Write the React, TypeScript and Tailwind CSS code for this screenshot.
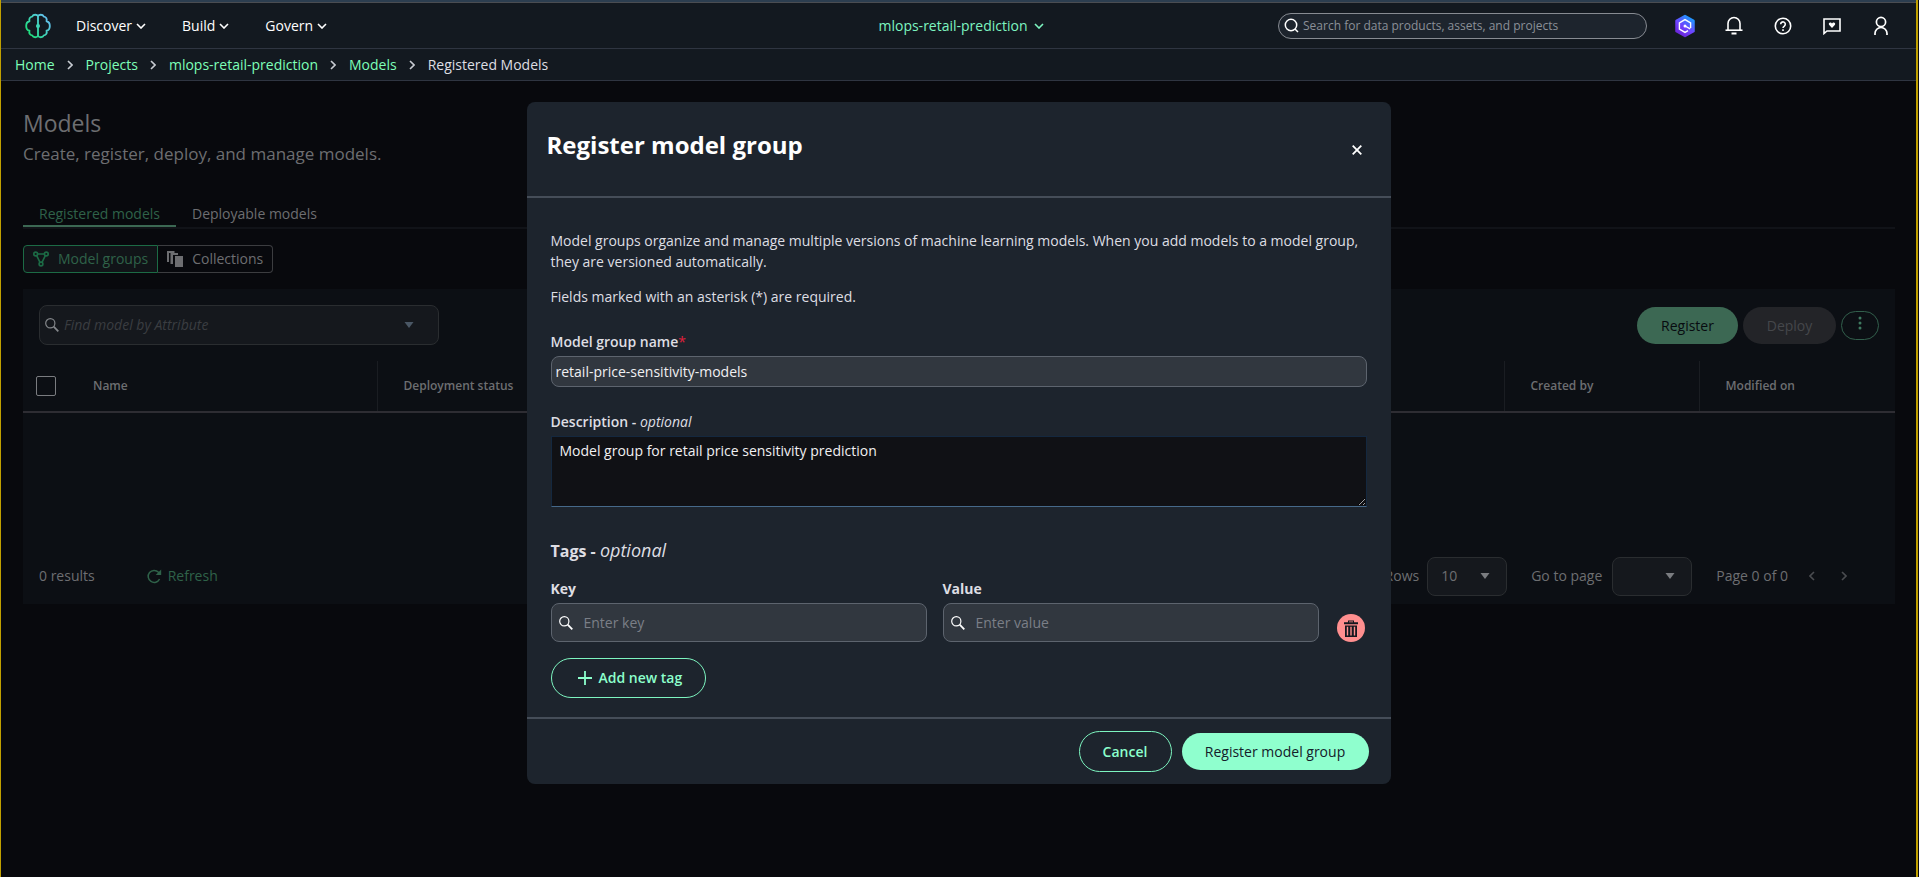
import { ReactNode, useState } from 'react';

const menus = ['Discover', 'Build', 'Govern'];
const crumbs = ['Home', 'Projects', 'mlops-retail-prediction', 'Models'];

function ChevronDown() {
  return (
    <svg className="w-[10px] h-[6px]" viewBox="0 0 10 6" fill="none" stroke="currentColor" strokeWidth="1.6">
      <path d="M1 1l4 4 4-4" />
    </svg>
  );
}

function ChevronRight({ className = '' }: { className?: string }) {
  return (
    <svg className={`w-[6px] h-[10px] ${className}`} viewBox="0 0 6 10" fill="none" stroke="currentColor" strokeWidth="1.6">
      <path d="M1 1l4 4-4 4" />
    </svg>
  );
}

function Caret({ className = '' }: { className?: string }) {
  return (
    <svg className={`w-[10px] h-[6px] pointer-events-none ${className}`} viewBox="0 0 10 6" fill="currentColor">
      <path d="M0.5 0h9L5 6z" />
    </svg>
  );
}

function SearchIcon({ className = '' }: { className?: string }) {
  return (
    <svg className={`w-[14px] h-[14px] ${className}`} viewBox="0 0 14 14" fill="none" stroke="currentColor">
      <circle cx="5.3" cy="5.3" r="4.6" strokeWidth="1.2" />
      <path d="M8.7 8.7l4.6 4.6" strokeWidth="1.8" />
    </svg>
  );
}

function Logo() {
  return (
    <svg className="w-[26px] h-[26px]" viewBox="0 0 24 24" fill="none" stroke="url(#logo)" strokeWidth="1.7" strokeLinejoin="round">
      <defs>
        <linearGradient id="logo" x1="0" y1="22" x2="24" y2="3" gradientUnits="userSpaceOnUse">
          <stop offset="0" stopColor="#10e060" />
          <stop offset="0.5" stopColor="#3fd6b8" />
          <stop offset="1" stopColor="#6fb8ff" />
        </linearGradient>
      </defs>
      <path d="M12 3C11.200 1.200 7.800 0.900 6.600 3.300C4.400 3.600 3.600 5.400 4.100 7.600C2.200 8 1.100 9.700 1.100 12S2.200 16 4.100 16.400C3.600 18.600 4.400 20.400 6.600 20.700C7.800 23.100 11.200 22.800 12 21V3z" />
      <path d="M12 3C12.800 1.200 16.200 0.900 17.400 3.300C19.600 3.600 20.400 5.400 19.900 7.600C21.800 8 22.900 9.700 22.900 12S21.800 16 19.900 16.400C20.400 18.600 19.600 20.400 17.400 20.700C16.200 23.100 12.800 22.800 12 21" />
      <circle cx="12" cy="12" r="1.900" fill="#3fd6b8" stroke="none" />
    </svg>
  );
}

function IconButton({ label, children }: { label: string; children: ReactNode }) {
  return (
    <button aria-label={label} className="w-6 h-6 flex items-center justify-center">
      {children}
    </button>
  );
}

function TopBar() {
  return (
    <header className="flex items-center h-[46px] pl-6 pr-[23px] bg-[#131920] border-b border-[#2f3541]">
      <div className="flex-1 flex items-center">
        <Logo />
        <nav className="flex items-center gap-9 ml-[25px]">
          {menus.map((menu) => (
            <button key={menu} className="flex items-center gap-1 text-white">
              {menu}
              <ChevronDown />
            </button>
          ))}
        </nav>
      </div>
      <button className="flex items-center gap-[6px] pl-1 text-[#7df5c0]">
        mlops-retail-prediction
        <ChevronDown />
      </button>
      <div className="flex-1 flex items-center justify-end">
        <label className="flex items-center gap-1 w-[369px] h-[26px] pl-[5px] pr-3 rounded-full border border-[#878b92] bg-[#1d242d]">
          <svg className="w-[15px] h-[15px] shrink-0 text-white" viewBox="0 0 15 15" fill="none" stroke="currentColor" strokeWidth="1.5">
            <circle cx="7" cy="7" r="5.7" />
            <path d="M11 11l3 3" />
          </svg>
          <input
            type="search"
            aria-label="Search"
            placeholder="Search for data products, assets, and projects"
            className="flex-1 min-w-0 bg-transparent text-xs outline-none placeholder:text-[#8b9098]"
          />
        </label>
        <div className="flex items-center gap-[25px] ml-[26px] text-white">
          <IconButton label="Assistant">
            <svg className="w-[22px] h-6" viewBox="0 0 22 24" fill="none">
              <defs>
                <linearGradient id="assistant" x1="4" y1="22" x2="18" y2="2" gradientUnits="userSpaceOnUse">
                  <stop offset="0" stopColor="#6a1fd0" />
                  <stop offset="0.45" stopColor="#6f42ff" />
                  <stop offset="1" stopColor="#0fa8ff" />
                </linearGradient>
              </defs>
              <path d="M11 2l8.500 4.800v10.400L11 22l-8.500-4.800V6.800z" fill="url(#assistant)" stroke="url(#assistant)" strokeWidth="2.500" strokeLinejoin="round" />
              <path d="M16.600 14V8.800L11 5.600 5.400 8.800v6.400L11 18.400l3-1.700" stroke="#fff" strokeWidth="1.400" />
              <path d="M11 12l5.200 2.800" stroke="#fff" strokeWidth="1.400" />
              <circle cx="11" cy="12" r="1.500" fill="#fff" />
            </svg>
          </IconButton>
          <IconButton label="Notifications">
            <svg className="w-[18px] h-[19px]" viewBox="0 0 18 19" fill="none" stroke="currentColor" strokeWidth="1.600">
              <path d="M3 14V7.500a6 6 0 0 1 12 0V14" />
              <path d="M0.500 14.200h17" />
              <path d="M6.500 17.500h5" strokeWidth="2" />
            </svg>
          </IconButton>
          <IconButton label="Help">
            <svg className="w-[18px] h-[18px]" viewBox="0 0 18 18" fill="none" stroke="currentColor" strokeWidth="1.600">
              <circle cx="9" cy="9" r="7.700" />
              <path d="M6.700 7.200a2.300 2.300 0 1 1 3.700 1.800C9.500 9.600 9 9.900 9 11" />
              <path d="M9 12.200v1.800" />
            </svg>
          </IconButton>
          <IconButton label="Feedback">
            <svg className="w-[18px] h-[18px]" viewBox="0 0 18 18" fill="none" stroke="currentColor" strokeWidth="1.600">
              <path d="M1 16.500V2h16v12H4z" />
              <path d="M9 11L6 7.800C5.400 6.600 6.200 5.600 7.200 5.600c0.900 0 1.500 0.500 1.800 1 0.300-0.500 0.900-1 1.800-1 1 0 1.800 1 1.200 2.200z" fill="currentColor" stroke="none" />
            </svg>
          </IconButton>
          <IconButton label="Account">
            <svg className="w-[16px] h-[20px]" viewBox="0 0 16 20" fill="none" stroke="currentColor" strokeWidth="1.700">
              <circle cx="8" cy="6" r="4.600" />
              <path d="M2 19v-1.500a6 6 0 0 1 12 0V19" />
            </svg>
          </IconButton>
        </div>
      </div>
    </header>
  );
}

function Breadcrumbs() {
  return (
    <nav className="flex items-center gap-[13px] h-8 pl-[14px] bg-[#131920] border-b border-[#2f3541]">
      {crumbs.map((crumb) => (
        <span key={crumb} className="flex items-center gap-3">
          <a href="#" className="text-[#7dffb8]">{crumb}</a>
          <ChevronRight className="text-[#c8ccd2]" />
        </span>
      ))}
      <span className="text-[#dedee3]">Registered Models</span>
    </nav>
  );
}

function ModelsTable() {
  return (
    <section className="mt-4 bg-[#0c0f14]">
      <div className="flex items-center justify-between h-[72px] px-4">
        <label className="flex items-center w-[400px] h-10 pl-[5px] rounded-lg border border-[#2a2d30] bg-[#15181d] text-[#84878b]">
          <SearchIcon />
          <input
            aria-label="Find model"
            placeholder="Find model by Attribute"
            className="flex-1 ml-[5px] bg-transparent italic outline-none placeholder:text-[#3a3d41]"
          />
          <Caret className="mr-6 text-[#4a5765]" />
        </label>
        <div className="flex items-center gap-[5px]">
          <button className="w-[101px] h-[37px] pt-[2px] rounded-full bg-[#3c6853] text-[#080b10]">Register</button>
          <button disabled className="w-[93px] h-[37px] pt-[2px] rounded-full bg-[#232428] text-[#45474b]">Deploy</button>
          <button aria-label="More actions" className="flex items-center justify-center w-[38px] h-[29px] rounded-full border border-[#325f4c] text-[#3f7a60]">
            <svg className="w-1 h-[14px] mb-1" viewBox="0 0 4 14" fill="currentColor">
              <circle cx="2" cy="2" r="1.500" />
              <circle cx="2" cy="7" r="1.500" />
              <circle cx="2" cy="12" r="1.500" />
            </svg>
          </button>
        </div>
      </div>
      <table className="w-full table-fixed text-xs text-[#6d6e71]">
        <thead>
          <tr className="h-[51px] border-b-2 border-[#2e2d33] text-left">
            <th className="w-12 pl-[13px]">
              <input
                type="checkbox"
                aria-label="Select all"
                className="block appearance-none w-5 h-5 rounded-[2px] border border-[#7a7c80]"
              />
            </th>
            <th className="w-[306px] pl-[22px] border-r border-[#1a1d22] font-semibold">Name</th>
            <th className="pl-[26px] font-semibold">Deployment status</th>
            <th className="w-[195px] pl-[26px] border-l border-[#1a1d22] font-semibold">Created by</th>
            <th className="w-[196px] pl-[26px] border-l border-[#1a1d22] font-semibold">Modified on</th>
          </tr>
        </thead>
      </table>
      <div className="flex items-center justify-between mt-[135px] h-14 px-4 text-[#6d6e71]">
        <div className="flex items-center gap-[52px]">
          <span>0 results</span>
          <button className="flex items-center gap-[6px] text-[#2f6249]">
            <svg className="w-[15px] h-[15px]" viewBox="0 0 15 15" fill="none" stroke="currentColor" strokeWidth="1.500">
              <path d="M12.600 10A6 6 0 1 1 11.500 3.200L13.500 5" />
              <path d="M14.200 0.500v5.500h-5.500z" fill="currentColor" stroke="none" />
            </svg>
            Refresh
          </button>
        </div>
        <div className="flex items-center pr-8">
          <label htmlFor="rows" className="mr-2">Rows</label>
          <div className="grid items-center w-20 mr-6">
            <select id="rows" className="col-start-1 row-start-1 appearance-none w-full h-[39px] pl-[13px] rounded-lg border border-[#2a2d30] bg-[#15181d]">
              <option>10</option>
            </select>
            <Caret className="col-start-1 row-start-1 justify-self-end mr-[17px] text-[#7a7c80]" />
          </div>
          <label htmlFor="page" className="mr-[10px]">Go to page</label>
          <div className="grid items-center w-20 mr-6">
            <select id="page" className="col-start-1 row-start-1 appearance-none w-full h-[39px] pl-[13px] rounded-lg border border-[#2a2d30] bg-[#15181d]" />
            <Caret className="col-start-1 row-start-1 justify-self-end mr-[17px] text-[#7a7c80]" />
          </div>
          <span>Page 0 of 0</span>
          <button aria-label="Previous page" className="ml-[21px] text-[#4a4c50]">
            <ChevronRight className="rotate-180" />
          </button>
          <button aria-label="Next page" className="ml-[26px] text-[#4a4c50]">
            <ChevronRight />
          </button>
        </div>
      </div>
    </section>
  );
}

function TagField({ id, label, placeholder }: { id: string; label: string; placeholder: string }) {
  return (
    <div className="flex-1">
      <label htmlFor={id} className="block font-bold leading-5">{label}</label>
      <div className="flex items-center h-[39px] mt-1 pl-[7px] rounded-lg border border-[#5d646e] bg-[#31373f]">
        <SearchIcon className="text-white" />
        <input id={id} placeholder={placeholder} className="flex-1 ml-[11px] bg-transparent outline-none placeholder:text-[#7b7f87]" />
      </div>
    </div>
  );
}

function RegisterDialog() {
  const [name, setName] = useState('retail-price-sensitivity-models');
  const [description, setDescription] = useState('Model group for retail price sensitivity prediction');

  return (
    <div role="dialog" aria-labelledby="dialog-title" className="w-[864px] rounded-lg bg-[#1d242d] text-[#dedee3]">
      <div className="flex items-start justify-between h-24 pt-[27px] pl-5 pr-[29px] border-b-2 border-[#454d58]">
        <h2 id="dialog-title" className="text-2xl leading-8 font-bold text-white">Register model group</h2>
        <button aria-label="Close" className="mt-4 text-white">
          <svg className="w-[10px] h-[10px]" viewBox="0 0 10 10" stroke="currentColor" strokeWidth="1.8">
            <path d="M0.700 0.700l8.600 8.600M9.300 0.700L0.700 9.300" />
          </svg>
        </button>
      </div>

      <form id="register-form" className="pt-8 px-6 pb-[19px] border-b-2 border-[#454d58]">
        <p className="leading-[21px]">
          Model groups organize and manage multiple versions of machine learning models. When you add models to a model group,
          they are versioned automatically.
        </p>
        <p className="mt-[14px] leading-[21px]">Fields marked with an asterisk (*) are required.</p>

        <label htmlFor="group-name" className="block mt-[25px] font-semibold leading-5">
          Model group name<span className="font-normal text-[#e0203c]">*</span>
        </label>
        <input
          id="group-name"
          value={name}
          onChange={(e) => setName(e.target.value)}
          className="block w-full h-[31px] mt-1 px-1 rounded-lg border border-[#5d646e] bg-[#31373f] text-[#f0f0f2] outline-none"
        />

        <label htmlFor="description" className="block mt-[25px] font-semibold leading-5">
          Description - <em className="font-normal">optional</em>
        </label>
        <textarea
          id="description"
          value={description}
          onChange={(e) => setDescription(e.target.value)}
          className="block w-full h-[71px] mt-1 px-2 py-[3px] leading-[21px] border border-[#14283f] border-b-[#46698a] bg-[#101115] text-[#f0f0f2] outline-none"
        />

        <h3 className="mt-[31px] text-base leading-6 font-bold">
          Tags - <em className="text-lg leading-6 font-normal">optional</em>
        </h3>
        <div className="flex items-end gap-4 mt-4">
          <TagField id="tag-key" label="Key" placeholder="Enter key" />
          <TagField id="tag-value" label="Value" placeholder="Enter value" />
          <button type="button" aria-label="Remove tag" className="flex items-center justify-center w-7 h-7 mx-[2px] rounded-full bg-[#ff8f8f] text-[#14181f]">
            <svg className="w-[14px] h-[17px]" viewBox="0 0 14 17" fill="currentColor">
              <path d="M4 2.200V0.500h6v1.700h4v2H0v-2zM5 1.500v0.700h4v-0.700z" fillRule="evenodd" />
              <path d="M1 5.500h12V17H1zM2.800 6.700v8.800h1.400V6.700zM6.300 6.700v8.800h1.400V6.700zM9.800 6.700v8.800h1.400V6.700z" fillRule="evenodd" />
            </svg>
          </button>
        </div>
        <button type="button" className="flex items-center gap-[7px] h-10 mt-4 pl-[26px] pr-[23px] rounded-full border border-[#7df5c0] text-[#8cffcc] font-semibold">
          <svg className="w-[14px] h-[14px]" viewBox="0 0 14 14" stroke="currentColor" strokeWidth="1.800">
            <path d="M7 0v14M0 7h14" />
          </svg>
          Add new tag
        </button>
      </form>

      <div className="flex items-center justify-end gap-[10px] h-[65px] pr-[22px]">
        <button className="w-[93px] h-[41px] rounded-full border border-[#7df5c0] text-[#8cffcc] font-semibold">Cancel</button>
        <button form="register-form" type="button" className="w-[187px] h-[37px] rounded-full bg-[#8fffce] text-[#14202a]">
          Register model group
        </button>
      </div>
    </div>
  );
}

export default function App() {
  return (
    <div className="min-h-screen bg-[#08090d] border-l border-[#c0a000] font-['Open_Sans','Noto_Sans',sans-serif] text-sm">
      <div className="relative min-h-screen mr-px border-r-2 border-[#c0a000]">
        <div className="h-[3px] bg-[#2c3e50] border-b border-[#4a4d52]" />
        <TopBar />
        <Breadcrumbs />
        <main className="pt-[26px] pl-[22px] pr-[21px] text-[#6d6e71]">
          <h1 className="text-[23px] leading-8">Models</h1>
          <p className="mt-px text-[17px] leading-7">Create, register, deploy, and manage models.</p>
          <div role="tablist" className="flex mt-9 border-b-2 border-[#111318]">
            <button role="tab" aria-selected="true" className="h-[23px] px-4 pb-1 -mb-px border-b-2 border-[#3c6853] text-[#2f6249]">
              Registered models
            </button>
            <button role="tab" aria-selected="false" className="h-[23px] px-4 pb-1">Deployable models</button>
          </div>
          <div className="flex mt-4">
            <button className="flex items-center gap-[9px] h-7 px-[9px] rounded-l-sm border border-[#1c6b45] bg-[#111418] text-[#2f6249]">
              <svg className="w-4 h-4" viewBox="0 0 16 16" fill="none" stroke="#1c6b45" strokeWidth="1.600">
                <circle cx="2.700" cy="3" r="1.900" />
                <circle cx="13.300" cy="3" r="1.900" />
                <circle cx="8" cy="13" r="1.900" />
                <path d="M4.500 3h7M3.700 4.700L7 11.300M12.300 4.700L9 11.300" />
              </svg>
              Model groups
            </button>
            <button className="flex items-center gap-[9px] h-7 px-[9px] rounded-r-sm border border-l-0 border-[#3c3d40]">
              <svg className="w-4 h-4" viewBox="0 0 16 16" fill="currentColor">
                <path d="M0 0h7.500v2H2v9H0zM3.500 2h7.500v2H6v9H3.500zM8 5h8v11H8z" />
              </svg>
              Collections
            </button>
          </div>
          <ModelsTable />
        </main>

        <div className="absolute inset-x-0 top-[102px] flex justify-center">
          <RegisterDialog />
        </div>
      </div>
    </div>
  );
}
